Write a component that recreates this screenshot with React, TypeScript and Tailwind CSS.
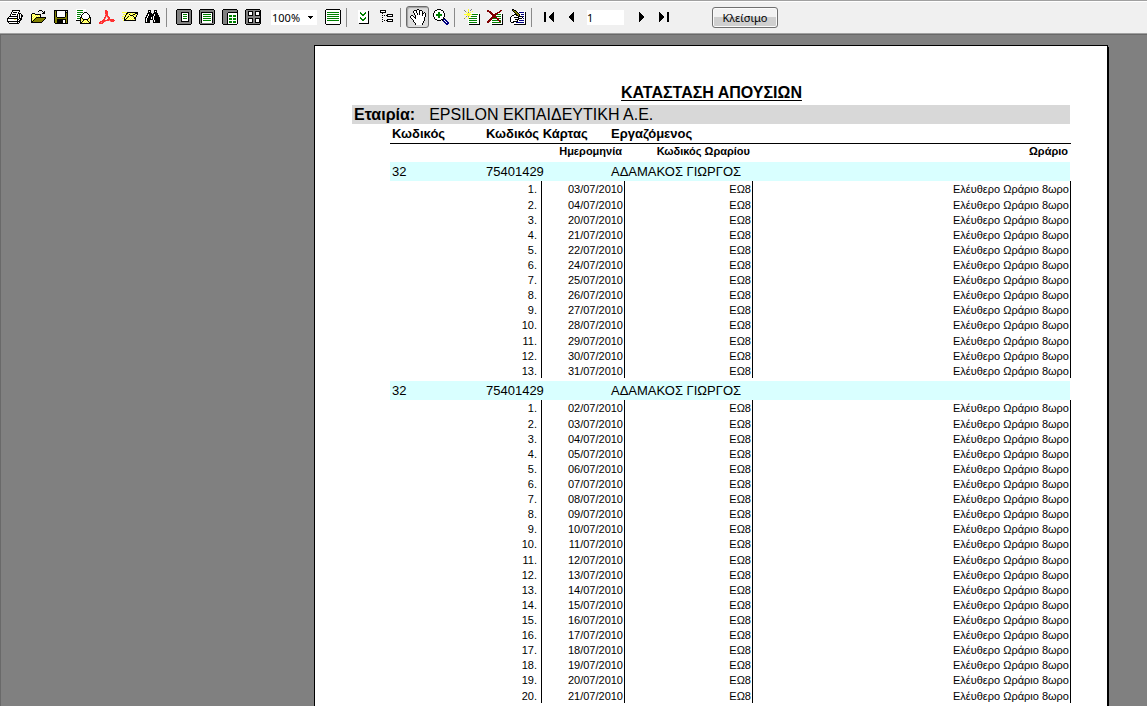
import React from 'react';

const PALETTE: Record<string, string> = {
  k: '#000000',
  w: '#ffffff',
  y: '#ffff33',
  p: '#ffffaa',
  o: '#808000',
  g: '#008000',
  r: '#800000',
  e: '#ff3030',
  f: '#ff8a8a',
  n: '#000080',
  s: '#808080',
  l: '#c8c8c8',
};

const ICONS: Record<string, string[]> = {
  print: [
    '                ',
    '     kkkkkkkk   ',
    '     kwwwwwwk   ',
    '    kwkkkkwk    ',
    '    kwwwwwwkkk  ',
    '   kwkkkkwkwkwk ',
    '   kwwwwwwkwkwkk',
    '  kkkkkkkkkwkwkk',
    ' kwwwwwwwwkwkwk ',
    'kkkkkkkkkkkwkkk ',
    'kwwwwwwyywkkwkk ',
    'kwwwwwwwwwkwkk  ',
    'kkkkkkkkkkkkk   ',
    ' kwwwwwwwwkwk   ',
    '  kkkkkkkkkk    ',
    '                ',
  ],
  open: [
    '                ',
    '         kkk    ',
    '        k   k k ',
    '             kk ',
    '  kkk       kkk ',
    ' kypykkkkkk     ',
    ' kpypypypyk     ',
    ' kypypypypk     ',
    ' kpypykkkkkkkkkk',
    ' kypykoooooooook',
    ' kpykoooooooook ',
    ' kykoooooooook  ',
    ' kkoooooooook   ',
    ' kkkkkkkkkkk    ',
    '                ',
    '                ',
  ],
  save: [
    '                ',
    ' kkkkkkkkkkkkkk ',
    ' kokwwwwwwwwklk ',
    ' kokwwwwwwwwkkk ',
    ' kokwwwwwwwwkok ',
    ' kokwwwwwwwwkok ',
    ' kokwwwwwwwwkok ',
    ' kokwwwwwwwwkok ',
    ' kookkkkkkkkook ',
    ' kooooooooooook ',
    ' kookkkkkkkkkok ',
    ' kookkkkkkwwkok ',
    ' kookkkkkkwwkok ',
    ' kookkkkkkwwkok ',
    '  kkkkkkkkkkkkk ',
    '                ',
  ],
  exportMail: [
    'wwwwwwwwww      ',
    'wggggggwww      ',
    'wwwwwwwwww      ',
    'wggggggwkkk     ',
    'wwwwwwwkwwwk    ',
    'wggggwkwwwwwk   ',
    'wwwwwkwwwwwwwk  ',
    'wgggwkwwwwwwwk  ',
    'wwwwkkwwwwwwwkk ',
    'wgggkykwwwwwkyk ',
    'wwwwkpykkkkkypk ',
    'kkkkkypkypykpyk ',
    '    kpkypypykpk ',
    '    kkypypypykk ',
    '    kkkkkkkkkkk ',
    '                ',
  ],
  pdf: [
    '                ',
    '      ee        ',
    '      eee       ',
    '      eee       ',
    '      eee       ',
    '      fee       ',
    '      eee       ',
    '      efee      ',
    '     ee fee     ',
    '     ef  ee     ',
    '    ee  eeeeeee ',
    '   eeeeeeefeeeee',
    ' eeeeef    feee ',
    'eefee           ',
    'eeee            ',
    '                ',
  ],
  send: [
    '                ',
    '                ',
    '                ',
    'yyyyykkkkkkkkkkk',
    '    kkypypypykkk',
    ' yyykypkypykkypk',
    '   kypypkkkypyk ',
    'yyykpykypypkpyk ',
    '  kypkypypypkk  ',
    'yykpkypypypykk  ',
    '  kkypypypypyk  ',
    ' ykkkkkkkkkkkk  ',
    '                ',
    '                ',
    '                ',
    '                ',
  ],
  find: [
    '                ',
    '   kkk   kkk    ',
    '   kwk   kwk    ',
    '   kkk   kkk    ',
    '  kkkkk kkkkk   ',
    '  kwkkkkkwkkk   ',
    ' kkwkkkkkwkkkk  ',
    ' kwkkkkkwkkkkk  ',
    'kkwkkkwkwkkkkkk ',
    'kwkkkkwkwkkkkkk ',
    'kwkkkkkkwkkkkkk ',
    'kwkkk   kwkkkkk ',
    'kwkkk   kwkkkkk ',
    'kkkkk   kkkkkkk ',
    '                ',
    '                ',
  ],
  actualSize: [
    ' kkkkkkkkkkkkkk ',
    'kssssssssssssssk',
    'kssssssssssssssk',
    'ksssskkkkkkkkssk',
    'ksssskwwwwwwkssk',
    'ksssskwggggwkssk',
    'ksssskwwwwwwkssk',
    'ksssskwggggwkssk',
    'ksssskwwwwwwkssk',
    'ksssskwggggwkssk',
    'ksssskwwwwwwkssk',
    'ksssskwwwwwwkssk',
    'ksssskkkkkkkkssk',
    'kssssssssssssssk',
    'kssssssssssssssk',
    ' kkkkkkkkkkkkkk ',
  ],
  pageWidth: [
    ' kkkkkkkkkkkkkk ',
    'kssssssssssssssk',
    'kssssssssssssssk',
    'kskkkkkkkkkkkksk',
    'kskwwwwwwwwwwksk',
    'kskwggggggggwksk',
    'kskwwwwwwwwwwksk',
    'kskwggggggggwksk',
    'kskwwwwwwwwwwksk',
    'kskwggggggggwksk',
    'kskwwwwwwwwwwksk',
    'kskwggggggggwksk',
    'kskwwwwwwwwwwksk',
    'kskwwwwwwwwwwksk',
    'kssssssssssssssk',
    ' kkkkkkkkkkkkkk ',
  ],
  twoPages: [
    ' kkkkkkkkkkkkkk ',
    'kssssssssssssssk',
    'kssssssssssssssk',
    'kssssskkkkkkkkkk',
    'ksssskwwwwwwwwwk',
    'ksssskwwwwwwwwwk',
    'ksssskwgggwgggwk',
    'ksssskwgggwgggwk',
    'ksssskwwwwwwwwwk',
    'ksssskwgggwgggwk',
    'ksssskwgggwgggwk',
    'ksssskwwwwwwwwwk',
    'ksssskwgggwgggwk',
    'ksssskwgggwgggwk',
    'ksssskwwwwwwwwwk',
    ' kkkkkkkkkkkkkk ',
  ],
  fourPages: [
    ' kkkkkkkkkkkkkk ',
    'kssssssssssssssk',
    'ksskkkkksskkkkkk',
    'ksskwwwksskwwwkk',
    'ksskwwwksskwwwkk',
    'ksskwwwksskwwwkk',
    'ksskkkkksskkkkkk',
    'kssssssssssssssk',
    'kssssssssssssssk',
    'ksskkkkksskkkkkk',
    'ksskwwwksskwwwkk',
    'ksskwwwksskwwwkk',
    'ksskwwwksskwwwkk',
    'ksskkkkksskkkkkk',
    'kssssssssssssssk',
    ' kkkkkkkkkkkkkk ',
  ],
  continuous: [
    ' kkkkkkkkkkkkkk ',
    'kwwwwwwwwwwwwwwk',
    'kwwwwwwwwwwwwwwk',
    'kwggggggggggggwk',
    'kwwwwwwwwwwwwwwk',
    'kwggggggggggggwk',
    'kwwwwwwwwwwwwwwk',
    'kwggggggggggggwk',
    'kwwwwwwwwwwwwwwk',
    'kwggggggggggggwk',
    'kwwwwwwwwwwwwwwk',
    'kwggggggggggggwk',
    'kwwwwwwwwwwwwwwk',
    'kwwwwwwwwwwwwwwk',
    'kwwwwwwwwwwwwwwk',
    ' kkkkkkkkkkkkkk ',
  ],
  expand: [
    '                ',
    '  wwwwwwwwww    ',
    '  wwwwwwwwwwk   ',
    '  wwgwwwwgwwk   ',
    '  wwggwwggwwk   ',
    '  wwwggggwwwk   ',
    '  wwwwggwwwwk   ',
    '  wwwwwwwwwwk   ',
    '  wwgwwwwgwwk   ',
    '  wwggwwggwwk   ',
    '  wwwggggwwwk   ',
    '  wwwwggwwwwk   ',
    '  wwwwwwwwwwk   ',
    '  wwwwwwwwwwk   ',
    '   kkkkkkkkkk   ',
    '                ',
  ],
  tree: [
    '                ',
    ' kkkkkk         ',
    ' kwwwwk         ',
    ' kkkkkk         ',
    '   k            ',
    '        kkkkkk  ',
    '   k k kkwwwwk  ',
    '        kkkkkk  ',
    '   k            ',
    '                ',
    '   k    kkkkkk  ',
    '     k kkwwwwk  ',
    '   k    kkkkkk  ',
    '                ',
    '                ',
    '                ',
  ],
  hand: [
    '       kk       ',
    '    kkkwwkkk    ',
    '   kwwkwwkwwk   ',
    '   kwwkwwkwwk k ',
    '    kwwkwkwwkkwk',
    '    kwwkwkwwkwwk',
    ' kk  kwwwwwwkwwk',
    'kwwk kwwwwwwwwwk',
    'kwwwkkwwwwwwwwk ',
    ' kwwwkwwwwwwwwk ',
    '  kwwwwwwwwwwwk ',
    '   kwwwwwwwwwwk ',
    '   kwwwwwwwwwk  ',
    '    kwwwwwwwwk  ',
    '     kwwwwwwk   ',
    '     kwwwwwwk   ',
  ],
  zoom: [
    '    kkkk        ',
    '  kkwwwwkk      ',
    ' kwwwwwwwwk     ',
    ' kwwwggwwwk     ',
    'kwwwwggwwwwk    ',
    'kwwggggggwwk    ',
    'kwwggggggwwk    ',
    'kwwwwggwwwwk    ',
    ' kwwwggwwwk     ',
    ' kwwwwwwwwkk    ',
    '  kkwwwwkknnn   ',
    '    kkkk knwnn  ',
    '          nnwnn ',
    '           nnwnn',
    '            nnnn',
    '             nn ',
  ],
  addPage: [
    '    y  s        ',
    's   y s         ',
    ' s  y   y       ',
    '  y s y         ',
    '   yyy wwwwwwww ',
    'yyyyyyyyggggggwk',
    '   yyywwwwwwwwwk',
    '  s s yggggggwwk',
    ' y  ywwwwwwwwwwk',
    's   yggggggggwwk',
    '    wwwwwwwwwwwk',
    '    wggggggggwwk',
    '    wwwwwwwwwwwk',
    '    wggggggggwwk',
    '    wwwwwwwwwwwk',
    '     kkkkkkkkkkk',
  ],
  deletePage: [
    '                ',
    'rr           rr ',
    'rrrr        rr  ',
    '  rrr     rrr   ',
    '   rrrwwrrrwwww ',
    '    rrrrrrggggwk',
    '    wrrrrwwwwwwk',
    '    wrrrrgggggwk',
    '    rrrrrrwwwwwk',
    '   rrrgggrrrggwk',
    '  rrrwwwwwrrwwwk',
    ' rrrwggggggrrgwk',
    'rrr wwwwwwwwrrwk',
    'rr  wgggggggggwk',
    '    wwwwwwwwwwwk',
    '     kkkkkkkkkkk',
  ],
  editPage: [
    '  kk            ',
    '  kokk          ',
    '   kookwwwwwwww ',
    '   wkookwnnnnnwk',
    '   wwkookwwwwwwk',
    '   wkkkookwnnnwk',
    '  kkwwkkokwwwwwk',
    ' kwwwwwwkkkknnwk',
    'kwwwkkkkkwwwkwwk',
    'kwwwwwwwkkkkwnwk',
    'kwwwwkkkkwwwwwwk',
    'kwwwwwwkwnnnnnwk',
    'kwwkkkkkwwwwwwwk',
    ' kkkwwnnnnnnnnwk',
    '   wwwwwwwwwwwwk',
    '    kkkkkkkkkkkk',
  ],
  first: [
    '                ',
    '                ',
    '                ',
    '   kk       k   ',
    '   kk      kk   ',
    '   kk     kkk   ',
    '   kk    kkkk   ',
    '   kk   kkkkk   ',
    '   kk   kkkkk   ',
    '   kk    kkkk   ',
    '   kk     kkk   ',
    '   kk      kk   ',
    '   kk       k   ',
    '                ',
    '                ',
    '                ',
  ],
  prev: [
    '                ',
    '                ',
    '                ',
    '         k      ',
    '        kk      ',
    '       kkk      ',
    '      kkkk      ',
    '     kkkkk      ',
    '     kkkkk      ',
    '      kkkk      ',
    '       kkk      ',
    '        kk      ',
    '         k      ',
    '                ',
    '                ',
    '                ',
  ],
};

// the forward glyphs are mirror images of the backward ones
ICONS.next = ICONS.prev.map((row) => [...row].reverse().join(''));
ICONS.last = ICONS.first.map((row) => [...row].reverse().join(''));

function PixelIcon({ name }: { name: string }) {
  return (
    <svg width="16" height="16" viewBox="0 0 16 16" shapeRendering="crispEdges" aria-hidden="true">
      {ICONS[name].flatMap((row, y) =>
        [...row].map((c, x) =>
          c === ' ' ? null : <rect key={`${x}-${y}`} x={x} y={y} width="1" height="1" fill={PALETTE[c]} />
        )
      )}
    </svg>
  );
}

function ToolButton({ icon, label, pressed }: { icon: string; label: string; pressed?: boolean }) {
  return (
    <button
      type="button"
      aria-label={label}
      aria-pressed={pressed}
      className={
        pressed
          ? 'flex h-[22px] w-[23px] items-center justify-center rounded-[3px] border border-[#6b6b6b] bg-[#dcdcdc] shadow-[inset_1px_1px_1px_#a0a0a0]'
          : 'flex h-[22px] w-[23px] items-center justify-center'
      }
    >
      <PixelIcon name={icon} />
    </button>
  );
}

function Separator() {
  return <div className="mr-[5px] ml-[2px] h-[19px] w-px bg-[#8a8a8a]" />;
}

function Toolbar() {
  return (
    <div
      role="toolbar"
      className="flex h-[34px] shrink-0 items-center border-t border-b border-t-[#a0a0a0] border-b-[#a0a0a0] bg-[#f0f0f0] pl-[3px] shadow-[inset_0_1px_0_#fff]"
    >
      <ToolButton icon="print" label="Εκτύπωση" />
      <ToolButton icon="open" label="Άνοιγμα" />
      <ToolButton icon="save" label="Αποθήκευση" />
      <ToolButton icon="exportMail" label="Εξαγωγή" />
      <ToolButton icon="pdf" label="PDF" />
      <ToolButton icon="send" label="Αποστολή" />
      <ToolButton icon="find" label="Εύρεση" />
      <Separator />
      <ToolButton icon="actualSize" label="Πραγματικό μέγεθος" />
      <ToolButton icon="pageWidth" label="Πλάτος σελίδας" />
      <ToolButton icon="twoPages" label="Δύο σελίδες" />
      <ToolButton icon="fourPages" label="Πολλές σελίδες" />
      <div className="relative mr-1 ml-[7px]">
        <select
          aria-label="Ζουμ"
          className="block h-[15px] w-[46px] appearance-none bg-white pl-px font-['Noto_Sans',sans-serif] text-[11px] leading-[15px] text-black"
        >
          <option>100%</option>
        </select>
        <svg
          width="5"
          height="3"
          viewBox="0 0 5 3"
          shapeRendering="crispEdges"
          className="pointer-events-none absolute top-[6px] right-[4px]"
          aria-hidden="true"
        >
          <path d="M0 0h5v1h-1v1h-1v1h-1v-1h-1v-1h-1z" />
        </svg>
      </div>
      <ToolButton icon="continuous" label="Συνεχής προβολή" />
      <Separator />
      <ToolButton icon="expand" label="Ανάπτυξη" />
      <ToolButton icon="tree" label="Δομή" />
      <Separator />
      <ToolButton icon="hand" label="Μετακίνηση" pressed />
      <ToolButton icon="zoom" label="Μεγέθυνση" />
      <Separator />
      <ToolButton icon="addPage" label="Νέα σελίδα" />
      <ToolButton icon="deletePage" label="Διαγραφή σελίδας" />
      <ToolButton icon="editPage" label="Επεξεργασία σελίδας" />
      <Separator />
      <ToolButton icon="first" label="Πρώτη" />
      <ToolButton icon="prev" label="Προηγούμενη" />
      <input
        aria-label="Σελίδα"
        defaultValue="1"
        className="mr-[5px] ml-1 h-[15px] w-[37px] bg-white font-['Noto_Sans',sans-serif] text-[11px] leading-[15px] text-black"
      />
      <ToolButton icon="next" label="Επόμενη" />
      <ToolButton icon="last" label="Τελευταία" />
      <button
        type="button"
        className="ml-[37px] h-[21px] w-[66px] rounded-[3px] border border-[#707070] bg-linear-to-b from-[#f2f2f2] from-50% to-[#cfcfcf] to-50% font-['Noto_Sans',sans-serif] text-[11px] leading-[19px] text-black shadow-[inset_0_0_0_1px_#fafafa]"
      >
        Κλείσιμο
      </button>
    </div>
  );
}

const groups = [
  {
    code: '32',
    card: '75401429',
    name: 'ΑΔΑΜΑΚΟΣ ΓΙΩΡΓΟΣ',
    days: ['03', '04', '20', '21', '22', '24', '25', '26', '27', '28', '29', '30', '31'],
  },
  {
    code: '32',
    card: '75401429',
    name: 'ΑΔΑΜΑΚΟΣ ΓΙΩΡΓΟΣ',
    days: [
      '02', '03', '04', '05', '06', '07', '08', '09', '10', '11',
      '12', '13', '14', '15', '16', '17', '18', '19', '20', '21',
    ],
  },
];

function GroupRows({ group }: { group: (typeof groups)[number] }) {
  return (
    <>
      <tbody className="bg-[#d9ffff] text-[13px] leading-[19px]">
        <tr className="h-[19px]">
          <td className="pl-[2px]">{group.code}</td>
          <td colSpan={2} className="pl-[2px]">{group.card}</td>
          <td colSpan={3} className="border-r border-white pl-[2px]">{group.name}</td>
        </tr>
      </tbody>
      <tbody className="text-[11px] leading-[13px] [&_td]:pt-[2px] [&>tr:nth-child(9n+2)]:h-4">
        {group.days.map((day, i) => (
          <tr key={day} className="h-[15px] text-right">
            <td colSpan={2} className="border-r border-black pr-1">{i + 1}.</td>
            <td colSpan={2} className="border-r border-black pr-px">{day}/07/2010</td>
            <td className="border-r border-black pr-px">ΕΩ8</td>
            <td className="border-r border-black pr-px">Ελέυθερο Ωράριο 8ωρο</td>
          </tr>
        ))}
      </tbody>
      <tbody>
        <tr className="h-[3px]">
          <td colSpan={6} />
        </tr>
      </tbody>
    </>
  );
}

function ReportPage() {
  return (
    <div className="mr-[39px] ml-auto min-h-[1123px] w-[794px] border border-black bg-white pr-9 pb-12 pl-[37px] font-['Liberation_Sans',Arial,sans-serif] text-black shadow-[1px_2px_0_#000]">
      <h1 className="pt-9 pb-px text-center text-[16px] leading-[22px] font-bold underline underline-offset-2">
        ΚΑΤΑΣΤΑΣΗ ΑΠΟΥΣΙΩΝ
      </h1>
      <div className="mr-px flex h-[19px] items-center gap-[14px] bg-[#d8d8d8] pt-px pl-[2px] text-[16px] leading-[20px]">
        <span className="font-bold">Εταιρία:</span>
        <span>EPSILON ΕΚΠΑΙΔΕΥΤΙΚΗ Α.Ε.</span>
      </div>
      <div className="pl-[38px]">
        <table className="w-full table-fixed border-separate border-spacing-0">
          <colgroup>
            <col className="w-[94px]" />
            <col className="w-[58px]" />
            <col className="w-[67px]" />
            <col className="w-[16px]" />
            <col className="w-[128px]" />
            <col />
          </colgroup>
          <thead>
            <tr className="h-5 text-left text-[13px] leading-[19px]">
              <th className="border-b border-black pl-[2px]">Κωδικός</th>
              <th colSpan={2} className="border-b border-black pl-[2px] whitespace-nowrap">Κωδικός Κάρτας</th>
              <th colSpan={3} className="border-b border-black pl-[2px]">Εργαζόμενος</th>
            </tr>
            <tr className="h-[18px] text-right align-top text-[11px] leading-[15px]">
              <th colSpan={2} />
              <th colSpan={2} className="pr-[3px]">Ημερομηνία</th>
              <th className="pr-[3px]">Κωδικός Ωραρίου</th>
              <th className="pr-[3px]">Ωράριο</th>
            </tr>
          </thead>
          {groups.map((group, i) => (
            <GroupRows key={i} group={group} />
          ))}
        </table>
      </div>
    </div>
  );
}

export default function App() {
  return (
    <div className="flex h-screen flex-col overflow-hidden bg-[#808080]">
      <Toolbar />
      <main className="min-h-0 flex-1 overflow-hidden border-t border-l border-[#696969] pt-[10px]">
        <ReportPage />
      </main>
    </div>
  );
}
